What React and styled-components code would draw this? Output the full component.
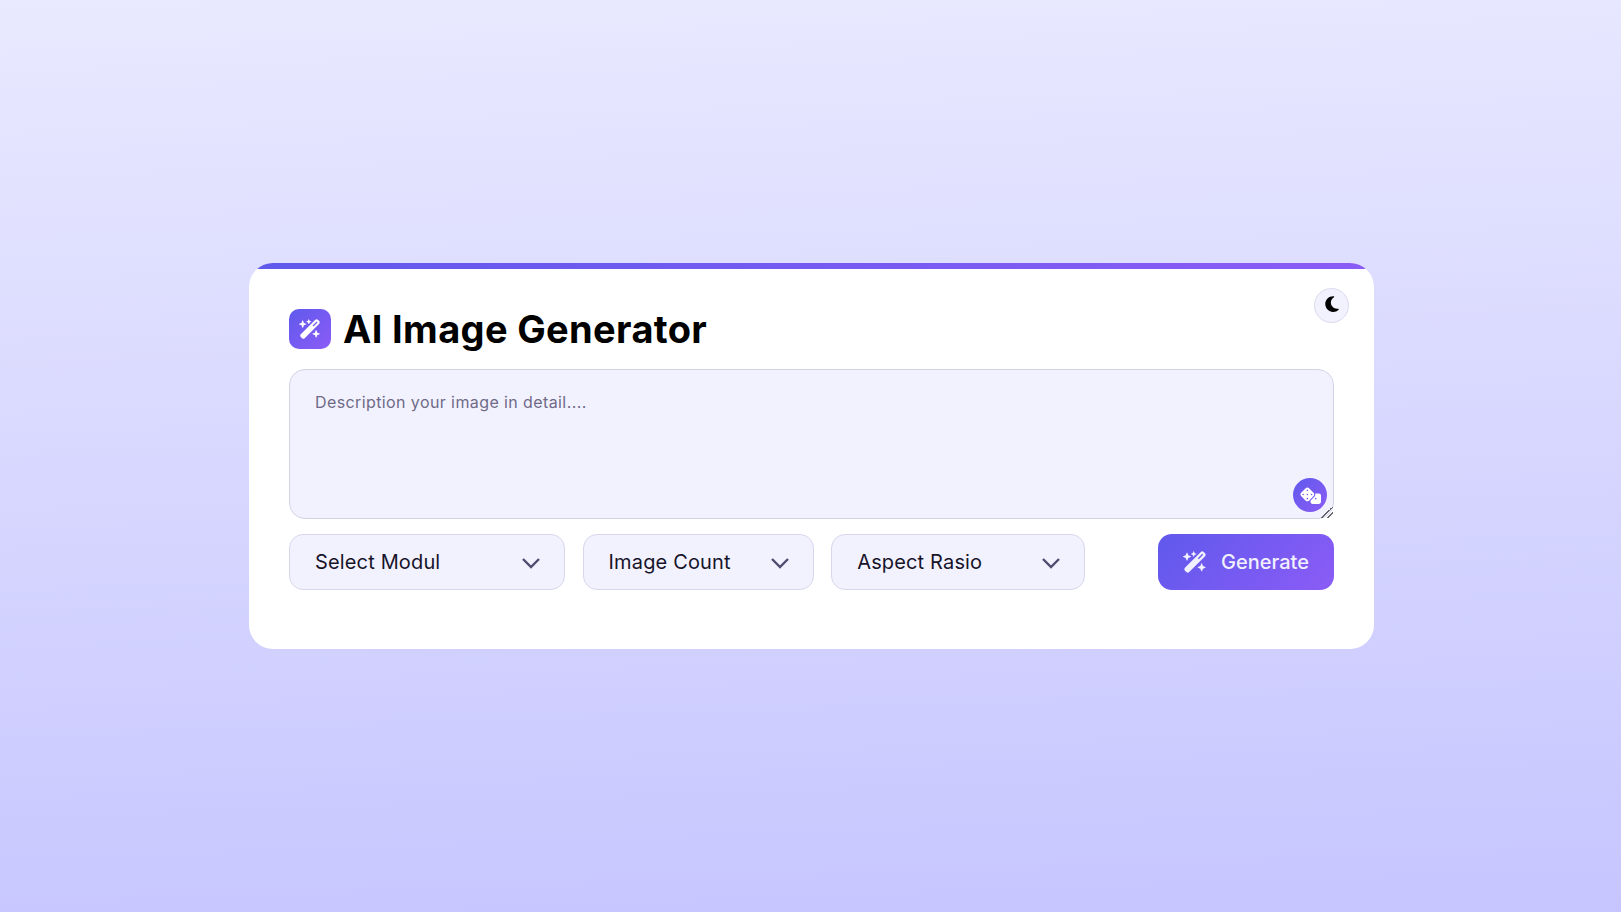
import React from "react";
import styled, { createGlobalStyle } from "styled-components";
import { FaWandMagicSparkles, FaDice, FaMoon } from "react-icons/fa6";

const GlobalStyle = createGlobalStyle`
  * {
    box-sizing: border-box;
  }
  body {
    margin: 0;
    font-family: "Inter", "Liberation Sans", sans-serif;
  }
`;

const Page = styled.div`
  min-height: 912px;
  display: flex;
  align-items: center;
  justify-content: center;
  padding-left: 2px;
  background: linear-gradient(178deg, #e9e9ff 0%, #c6c5ff 100%);
`;

const Card = styled.main`
  position: relative;
  width: 1125px;
  height: 386px;
  padding: 46px 40px 40px;
  background: #fff;
  border-radius: 24px;
  overflow: hidden;

  &::before {
    content: "";
    position: absolute;
    top: 0;
    left: 0;
    right: 0;
    height: 6px;
    background: linear-gradient(90deg, #6059ec, #8b5cf6);
  }
`;

const ThemeToggle = styled.button`
  position: absolute;
  top: 25px;
  right: 25px;
  width: 35px;
  height: 35px;
  padding: 0 0 3px;
  display: flex;
  align-items: center;
  justify-content: center;
  color: #000;
  font-size: 18px;
  background: #f2f2ff;
  border: 1px solid #dcd9ee;
  border-radius: 50%;
`;

const Header = styled.header`
  display: flex;
  align-items: center;
  gap: 12px;
  height: 40px;
  margin-bottom: 20px;
`;

const LogoBadge = styled.span`
  width: 42px;
  height: 40px;
  display: flex;
  align-items: center;
  justify-content: center;
  color: #fff;
  font-size: 22px;
  border-radius: 10px;
  background: linear-gradient(135deg, #6059ec, #8b5cf6);
`;

const Title = styled.h1`
  margin: 0;
  color: #000;
  font-size: 38px;
  font-weight: 700;
  letter-spacing: 0.35px;
  line-height: 40px;
`;

const PromptBox = styled.div`
  position: relative;
  height: 150px;
  margin-bottom: 15px;
`;

const Prompt = styled.textarea`
  display: block;
  width: 100%;
  height: 100%;
  padding: 20px 25px;
  color: #000;
  font-family: inherit;
  font-size: 16px;
  letter-spacing: 0.4px;
  line-height: 24px;
  background: #f2f2ff;
  border: 1px solid #d5d2e8;
  border-radius: 16px;
  outline: none;
  resize: vertical;

  &::placeholder {
    color: #6f6a87;
    opacity: 1;
  }

  &::-webkit-resizer {
    background: linear-gradient(
      135deg,
      transparent 60%,
      #666 60%,
      #666 66%,
      transparent 66%,
      transparent 78%,
      #666 78%,
      #666 84%,
      transparent 84%
    );
  }
`;

const DiceButton = styled.button`
  position: absolute;
  right: 7px;
  bottom: 7px;
  width: 34px;
  height: 34px;
  padding: 0;
  display: flex;
  align-items: center;
  justify-content: center;
  color: #fff;
  font-size: 21px;
  border: none;
  border-radius: 50%;
  background: linear-gradient(135deg, #6059ec, #8b5cf6);
`;

const Controls = styled.div`
  display: flex;
  align-items: stretch;
  height: 56px;
`;

const Selects = styled.div`
  display: flex;
  gap: 17.6px;
`;

const Select = styled.div`
  width: ${(p) => p.$width}px;
  padding: 0 23px 0 25px;
  display: flex;
  align-items: center;
  justify-content: space-between;
  color: #17142a;
  font-size: 20px;
  letter-spacing: 0.15px;
  background: #f2f2ff;
  border: 1px solid #d9d6ec;
  border-radius: 14px;

  svg {
    margin-top: 2px;
  }
`;

const GenerateButton = styled.button`
  width: 176px;
  margin-left: auto;
  display: flex;
  align-items: center;
  justify-content: center;
  gap: 14px;
  padding: 0;
  color: #f1f0ff;
  font-family: inherit;
  font-size: 20px;
  font-weight: 500;
  border: none;
  border-radius: 14px;
  background: linear-gradient(135deg, #6059ec, #8b5cf6);

  svg {
    font-size: 24px;
  }
`;

// native select arrow drawn by hand, lucide's is too narrow here
const Chevron = () => (
  <svg width="20" height="12" viewBox="0 0 20 12" fill="none">
    <path d="M2 2 L10 10 L18 2" stroke="#514c6e" strokeWidth="2.4" />
  </svg>
);

const App = () => {
  return (
    <>
      <GlobalStyle />
      <Page>
        <Card>
          <ThemeToggle aria-label="Toggle theme">
            <FaMoon />
          </ThemeToggle>
          <Header>
            <LogoBadge>
              <FaWandMagicSparkles />
            </LogoBadge>
            <Title>AI Image Generator</Title>
          </Header>
          <PromptBox>
            <Prompt placeholder="Description your image in detail...." />
            <DiceButton aria-label="Random prompt">
              <FaDice />
            </DiceButton>
          </PromptBox>
          <Controls>
            <Selects>
              <Select $width={276}>
                Select Modul
                <Chevron />
              </Select>
              <Select $width={231}>
                Image Count
                <Chevron />
              </Select>
              <Select $width={254}>
                Aspect Rasio
                <Chevron />
              </Select>
            </Selects>
            <GenerateButton>
              <FaWandMagicSparkles />
              Generate
            </GenerateButton>
          </Controls>
        </Card>
      </Page>
    </>
  );
};

export default App;
